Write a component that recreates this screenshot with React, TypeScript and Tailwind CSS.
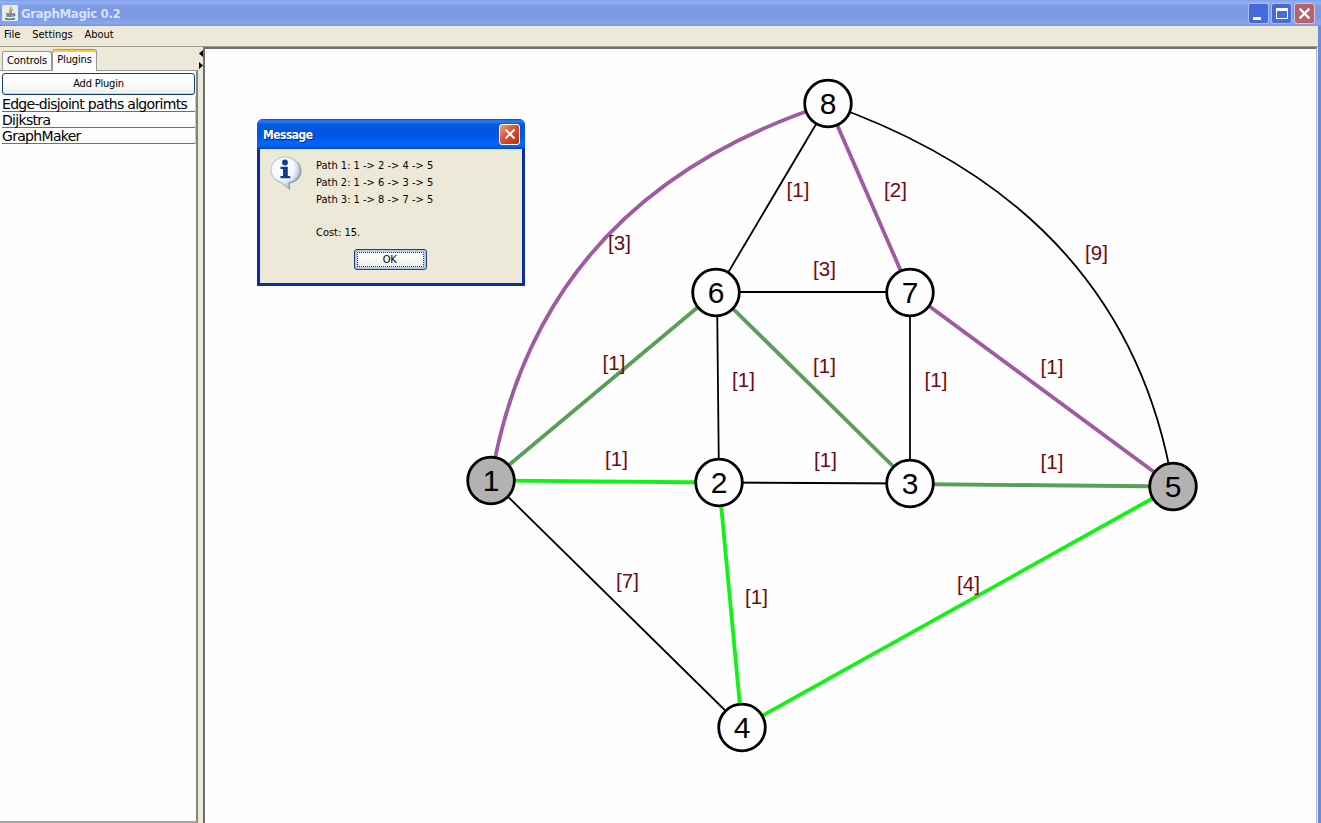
import React from "react";

type Point = [number, number];

const nodes: { id: string; x: number; y: number; filled?: boolean }[] = [
  { id: "8", x: 828, y: 103.5 },
  { id: "6", x: 716, y: 292.5 },
  { id: "7", x: 910, y: 292.5 },
  { id: "1", x: 491, y: 480.5, filled: true },
  { id: "2", x: 719, y: 482.5 },
  { id: "3", x: 910, y: 483.5 },
  { id: "5", x: 1173, y: 486.5, filled: true },
  { id: "4", x: 742, y: 727.5 },
];

const BLACK = "#000000";
const PURPLE = "#a05aa2";
const GREEN = "#58a05a";
const LIME = "#12f214";

const edges: { d: string; color: string }[] = [
  { d: "M828 104L716 293", color: BLACK },
  { d: "M716 292H910", color: BLACK },
  { d: "M717 292L719 483", color: BLACK },
  { d: "M910 292V483", color: BLACK },
  { d: "M719 482.5L910 483.5", color: BLACK },
  { d: "M491 480L742 727", color: BLACK },
  { d: "M828 104Q1127 209 1173 487", color: BLACK },
  { d: "M491 480Q538 198 828 104", color: PURPLE },
  { d: "M828 104L910 292", color: PURPLE },
  { d: "M910 292L1173 486", color: PURPLE },
  { d: "M491 480L716 292", color: GREEN },
  { d: "M716 292L910 483", color: GREEN },
  { d: "M910 484L1173 486.5", color: GREEN },
  { d: "M491 480.5L719 482.5", color: LIME },
  { d: "M719 483L742 727", color: LIME },
  { d: "M742 727L1173 487", color: LIME },
];

const labels: { text: string; at: Point }[] = [
  { text: "[1]", at: [798, 197] },
  { text: "[2]", at: [895.5, 197] },
  { text: "[3]", at: [619.5, 250] },
  { text: "[9]", at: [1096.5, 260] },
  { text: "[3]", at: [824.5, 276] },
  { text: "[1]", at: [614, 370] },
  { text: "[1]", at: [743.5, 387] },
  { text: "[1]", at: [824.5, 373] },
  { text: "[1]", at: [936, 387] },
  { text: "[1]", at: [1052, 374] },
  { text: "[1]", at: [616.5, 466] },
  { text: "[1]", at: [825.5, 467] },
  { text: "[1]", at: [1052, 469] },
  { text: "[7]", at: [627.5, 588] },
  { text: "[1]", at: [756.5, 604] },
  { text: "[4]", at: [968.5, 591] },
];

function Graph() {
  return (
    <svg
      className="block h-[774px] w-[1111px] font-['Liberation_Sans',Arial,sans-serif]"
      viewBox="205 49 1111 774"
      textAnchor="middle"
    >
      {edges.map((e) => (
        <path key={e.d} d={e.d} fill="none" stroke={e.color} strokeWidth={e.color === BLACK ? 1.8 : 3.8} />
      ))}
      {nodes.map((n) => (
        <g key={n.id}>
          <circle cx={n.x} cy={n.y} r={23.3} fill={n.filled ? "#b2b2b2" : "#fefefe"} stroke="#000" strokeWidth={2.8} />
          <text x={n.x} y={n.y + 10.5} fontSize={30}>
            {n.id}
          </text>
        </g>
      ))}
      {labels.map((l) => (
        <text key={l.at.join()} x={l.at[0]} y={l.at[1]} fontSize={20.5} fill="#6e0a12">
          {l.text}
        </text>
      ))}
    </svg>
  );
}

function JavaIcon() {
  return (
    <svg className="size-4" viewBox="0 0 16 16" fill="none">
      <rect width="16" height="16" rx="1" fill="#e9ece9" />
      <path d="M9 1.500C10 4 6 5 8 8M11 4C8.500 5.500 9.500 6.500 9 8" stroke="#c9864c" strokeWidth="1.300" />
      <path d="M4 9h7M4.500 11h6M3 13.500c3 1 7 1 10 0M11 9c2.500-.5 2 2 0 2" stroke="#50728f" strokeWidth="1.400" />
    </svg>
  );
}

function InfoIcon() {
  return (
    <svg className="h-[34px] w-8" viewBox="0 0 32 34">
      <defs>
        <radialGradient id="bubble" cx="40%" cy="35%" r="65%">
          <stop offset="0" stopColor="#ffffff" />
          <stop offset=".6" stopColor="#f2f7fb" />
          <stop offset="1" stopColor="#a3bddb" />
        </radialGradient>
      </defs>
      <path d="M17 2C8 2 2 7.500 2 15c0 6 4 10 9 12L20 34V27.500C27 26 31.500 21 31.500 15 31.500 7.500 25.500 2 17 2Z" fill="#6d7888" opacity=".7" />
      <path d="M15.500 1C7 1 1 6.800 1 14c0 6 4 10.500 9.500 12L18.500 32.500V26.400C25.500 25.200 30 20 30 14 30 6.800 24 1 15.500 1Z" fill="url(#bubble)" stroke="#9fb4cc" strokeWidth=".8" />
      <circle cx="15" cy="6.500" r="2.900" fill="#123a91" />
      <path d="M10.500 10.800H17.800V20H20.300V22.300H10.500V20H13V13H10.500Z" fill="#123a91" />
    </svg>
  );
}

function CloseGlyph({ className }: { className: string }) {
  return (
    <svg className={className} viewBox="0 0 12 12">
      <path d="M1.500 1.500L10.500 10.500M10.500 1.500L1.500 10.500" stroke="#fff" strokeWidth="2" />
    </svg>
  );
}

function Dialog() {
  return (
    <div className="absolute left-[52px] top-[70px] flex h-[167px] w-[268px] flex-col rounded-t-[6px] bg-[#0a2ea8] font-['DejaVu_Sans_Condensed','DejaVu_Sans',sans-serif]">
      <div className="flex h-[30px] items-center justify-between rounded-t-[6px] bg-[linear-gradient(#0a48c8_0%,#2a80f5_7%,#0558e0_18%,#0054e0_55%,#0366fa_80%,#0560f0_92%,#0040b8_100%)] pl-[6px] pr-[5px]">
        <span className="pt-[2px] text-[12px] font-bold tracking-[-0.53px] text-white [text-shadow:1px_1px_#0a2878]">Message</span>
        <span className="flex size-[21px] items-center justify-center rounded-[3px] border border-white bg-[linear-gradient(135deg,#eda080,#dc5030_45%,#b83010)]">
          <CloseGlyph className="size-3" />
        </span>
      </div>
      <div className="mx-[3px] mb-[3px] flex flex-1 flex-col bg-[#ece9d8]">
        <div className="flex h-[100px] pl-[10px] pt-[7px]">
          <InfoIcon />
          <div className="ml-[14px] whitespace-pre pt-[2px] text-[11px] leading-[16.8px] text-black">
            <p>{"Path 1: 1 -> 2 -> 4 -> 5"}</p>
            <p>{"Path 2: 1 -> 6 -> 3 -> 5"}</p>
            <p>{"Path 3: 1 -> 8 -> 7 -> 5"}</p>
            <p>{" "}</p>
            <p>Cost: 15.</p>
          </div>
        </div>
        <button className="ml-[94px] flex h-[21px] w-[73px] items-center justify-center rounded-[3px] border border-[#1c3e72] bg-[#b5cbec] p-[2px] text-[11px] tracking-[-0.4px]">
          <span className="flex h-full w-full items-center justify-center border border-dotted border-[#333] bg-[linear-gradient(#fff,#f0f0ea)] pr-[2px] pt-px">OK</span>
        </button>
      </div>
    </div>
  );
}

function TitleBar() {
  return (
    <header className="flex h-[26px] items-center bg-[linear-gradient(#7f9eea_0%,#94b0f0_8%,#7e9ce4_25%,#7b98e2_60%,#86a6ee_90%,#7893dc_100%)] pl-[2px] pr-[6px]">
      <JavaIcon />
      <span className="ml-[3px] font-['DejaVu_Sans_Condensed','DejaVu_Sans',sans-serif] text-[13px] font-bold leading-none tracking-[-0.3px] text-[#d8e4f8]">GraphMagic 0.2</span>
      <div className="ml-auto flex gap-[2px]">
        <span className="flex size-[21px] items-end rounded-[3px] border border-[#a9bff4] bg-[linear-gradient(135deg,#4068d8,#466edb)] pb-[3px] pl-[4px]">
          <span className="h-[3px] w-2 bg-white" />
        </span>
        <span className="flex size-[21px] items-center justify-center rounded-[3px] border border-[#a9bff4] bg-[linear-gradient(135deg,#4068d8,#466edb)]">
          <span className="h-[11px] w-3 border border-t-[3px] border-white" />
        </span>
        <span className="flex size-[21px] items-center justify-center rounded-[3px] border border-[#d5c4e0] bg-[#b7616a]">
          <CloseGlyph className="size-[13px]" />
        </span>
      </div>
    </header>
  );
}

function Sidebar() {
  return (
    <aside className="flex w-[198px] flex-col bg-[#ece9d8] font-['DejaVu_Sans_Condensed','DejaVu_Sans',sans-serif] text-[11px]">
      <div className="flex h-[23px] items-end pl-[2px]">
        <div className="flex h-[19px] w-[50px] items-center justify-center rounded-t-[3px] border border-b-0 border-[#919b9c] bg-[#f8f8f4] pt-px tracking-[-0.1px]">Controls</div>
        <div className="z-10 -mb-px flex h-[22px] w-[45px] justify-center rounded-t-[3px] border border-b-0 border-[#919b9c] border-t-[#e68b2c] bg-[#fcfcfe] pt-[2px] leading-[16px] tracking-[-0.15px] shadow-[inset_0_2px_#ffc73c]">Plugins</div>
      </div>
      <div className="flex flex-1 flex-col border-t border-b-2 border-r-2 border-t-[#919b9c] border-b-[#a5a59c] border-r-[#858580] bg-[#fefefe] pl-[2px] pt-[2px]">
        <button className="mb-px flex h-[22px] w-[193px] items-center justify-center rounded-[3px] border border-[#123f6b] bg-[linear-gradient(#fff_30%,#f0f0ea)] pt-px tracking-[-0.2px] shadow-[inset_0_-1px_#d8d4c8]">Add Plugin</button>
        <ul className="w-[194px] border-r border-[#c4c4c4] font-['DejaVu_Sans',sans-serif] text-[14px] leading-[16px] tracking-[-0.69px]">
          {["Edge-disjoint paths algorimts", "Dijkstra", "GraphMaker"].map((name) => (
            <li key={name} className="h-4 whitespace-nowrap border-b border-[#707070]">{name}</li>
          ))}
        </ul>
      </div>
    </aside>
  );
}

export default function App() {
  return (
    <div className="flex h-[823px] w-[1321px] flex-col overflow-hidden bg-[#ece9d8] text-black">
      <TitleBar />
      <div className="flex flex-1 border-r-[3px] border-[#6f88dc]">
        <div className="flex flex-1 flex-col">
          <nav className="flex h-[21px] items-center gap-3 border-b border-[#9c9a8c] pb-px pl-1 font-['DejaVu_Sans_Condensed','DejaVu_Sans',sans-serif] text-[11px] tracking-[-0.05px]">
            <span>File</span>
            <span>Settings</span>
            <span>About</span>
          </nav>
          <div className="flex flex-1">
            <Sidebar />
            <div className="flex w-[5px] flex-col items-end pt-[2px]">
              <svg className="h-5 w-1" viewBox="0 0 4 20">
                <path d="M4 1V8L0 4.500Z" />
                <path d="M0 13V20L4 16.500Z" />
              </svg>
            </div>
            <main className="relative w-[1114px] border-l-2 border-r border-t-2 border-[#6f6f6c] border-r-[#b5bac8] bg-[#fefefe]">
              <Graph />
              <Dialog />
            </main>
          </div>
        </div>
      </div>
    </div>
  );
}
